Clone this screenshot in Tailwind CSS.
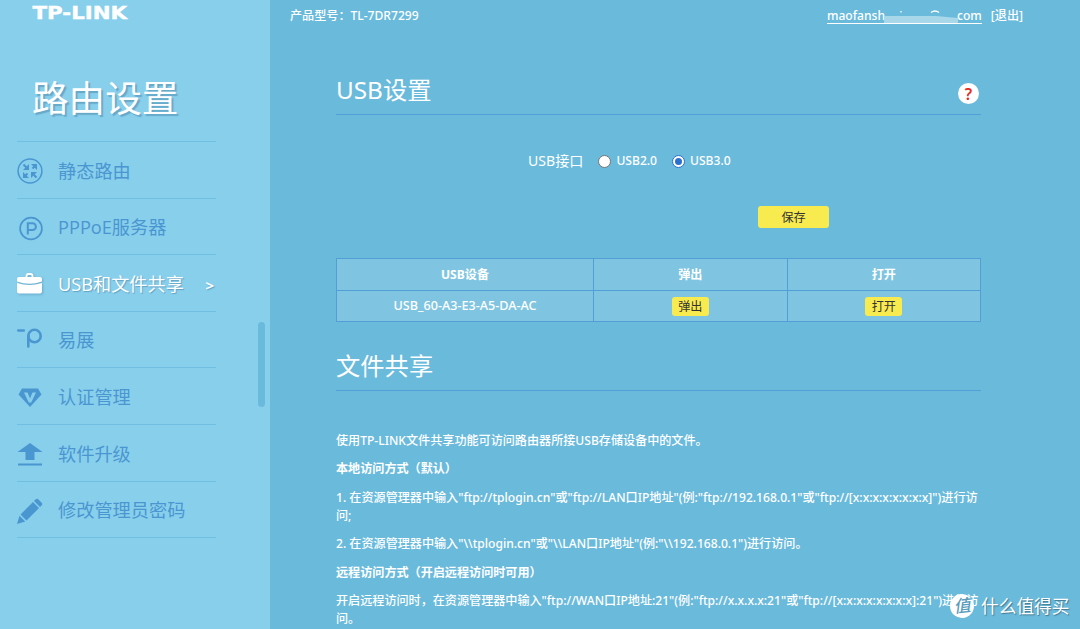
<!DOCTYPE html>
<html lang="zh-CN">
<head>
    <meta charset="UTF-8">
    <meta name="viewport" content="width=device-width, initial-scale=1.0">
    <title>TP-LINK 路由设置</title>
    <script src="https://cdn.jsdelivr.net/npm/@tailwindcss/browser@4"></script>
</head>
<body class="relative flex h-[629px] w-[1080px] overflow-hidden bg-[#6abadc] text-white font-['Open_Sans','Noto_Sans_CJK_SC',sans-serif]">

    <!-- Sidebar -->
    <aside class="relative h-full w-[270px] shrink-0 bg-[#88cfec] pl-[17px]">
        <svg class="ml-[15px] block h-[20px] w-[98px] overflow-visible" viewBox="0 0 98 20">
            <text x="0.5" y="19" textLength="94.5" lengthAdjust="spacingAndGlyphs" font-family="DejaVu Sans" font-weight="bold" font-size="16.8" fill="#fff" stroke="#fff" stroke-width="0.4">TP-LINK</text>
        </svg>
        <h1 class="ml-[15px] mt-[52px] h-[69px] whitespace-nowrap text-[36.6px] leading-[52px] text-shadow-[2px_2px_1px_rgb(70_130_165/0.5)]">路由设置</h1>

        <nav class="w-[199px] border-t border-[#71bfe0] text-[18.2px] text-[#4a96d1]">
            <a href="#" class="flex h-[56.6px] items-center border-b border-[#71bfe0] pt-[3px]">
                <svg class="h-[28px] w-[28px]" viewBox="0 0 28 28" fill="none" stroke="currentColor">
                    <circle cx="13" cy="14" r="11.9" stroke-width="1.5"/>
                    <path d="M6.500 7.500l4 4M19.500 7.500l-4 4M6.500 20.500l4-4M19.500 20.500l-4-4" stroke-width="2"/>
                    <path d="M12 7v6h-6zM20 7v6l-6-6zM12 21h-6v-6zM14 15h6l-6 6z" fill="currentColor" stroke="none"/>
                </svg>
                <span class="ml-[13px]">静态路由</span>
            </a>
            <a href="#" class="flex h-[56.6px] items-center border-b border-[#71bfe0] pt-[3px]">
                <svg class="h-[28px] w-[28px]" viewBox="0 0 28 28" fill="none" stroke="currentColor">
                    <circle cx="14" cy="14.500" r="10.900" stroke-width="1.700"/>
                    <path d="M10.800 20.500v-11.200h4.700a3.400 3.400 0 0 1 0 6.800h-4.700" stroke-width="2"/>
                </svg>
                <span class="ml-[13px]">PPPoE服务器</span>
            </a>
            <a href="#" class="flex h-[56.6px] items-center border-b border-[#71bfe0] pt-[3px] text-white text-shadow-[1px_1px_1px_rgb(70_130_165/0.6)]">
                <svg class="h-[28px] w-[28px] drop-shadow-[1px_1px_1px_rgb(70_130_165/0.5)]" viewBox="0 0 28 28" fill="currentColor">
                    <path d="M9.500 8v-2q0-2 2-2h2q2 0 2 2v2" fill="none" stroke="currentColor" stroke-width="1.800"/>
                    <path d="M2 7h21q2 0 2 2v2.500q-12.500 4.500-25 0v-2.500q0-2 2-2z"/>
                    <path d="M0 13q12.500 4.200 25 0v8.500q0 2-2 2h-21q-2 0-2-2z"/>
                </svg>
                <span class="ml-[13px]">USB和文件共享</span>
                <span class="ml-auto mr-[2px] mt-[2px] text-[15px] font-bold">&gt;</span>
            </a>
            <a href="#" class="flex h-[56.6px] items-center border-b border-[#71bfe0] pt-[3px]">
                <svg class="h-[28px] w-[28px]" viewBox="0 0 28 28" fill="none" stroke="currentColor" stroke-width="2.600" stroke-linecap="round">
                    <path d="M1.300 3.500h5.500M11.300 19.500v-10.500"/>
                    <circle cx="17.500" cy="9" r="6.200"/>
                </svg>
                <span class="ml-[13px]">易展</span>
            </a>
            <a href="#" class="flex h-[56.6px] items-center border-b border-[#71bfe0] pt-[3px]">
                <svg class="h-[28px] w-[28px]" viewBox="0 0 28 28" fill="currentColor">
                    <path d="M5 4.500h16l3.500 6-11.500 12.500-11.500-12.500z"/>
                    <path d="M7 8.500h3.500l2.500 6 2.500-6h3.500l-4.800 10h-2.400z" fill="#88cfec"/>
                </svg>
                <span class="ml-[13px]">认证管理</span>
            </a>
            <a href="#" class="flex h-[56.6px] items-center border-b border-[#71bfe0] pt-[3px]">
                <svg class="h-[28px] w-[28px]" viewBox="0 0 28 28" fill="currentColor">
                    <path d="M13 3l12.500 9h-8v8h-9v-8h-8zM1 23.500h24v2h-24z"/>
                </svg>
                <span class="ml-[13px]">软件升级</span>
            </a>
            <a href="#" class="flex h-[56.6px] items-center border-b border-[#71bfe0] pt-[3px]">
                <svg class="h-[28px] w-[28px]" viewBox="0 0 28 28" fill="currentColor">
                    <path d="M18.500 2.500q1.500-1.500 3 0l3 3q1.500 1.500 0 3l-1.500 1.500-6-6zM16 5l6 6-12.500 12.500-6-6zM2.500 18.800l5.700 5.700-8.200 2.500z"/>
                </svg>
                <span class="ml-[13px]">修改管理员密码</span>
            </a>
        </nav>

        <!-- Scrollbar thumb -->
        <div class="absolute left-[258px] top-[322px] h-[85px] w-[7px] rounded-full bg-[#6abadc]"></div>
    </aside>

    <!-- Main content -->
    <main class="flex h-full w-[810px] flex-col whitespace-nowrap font-medium font-['Noto_Sans','Noto_Sans_CJK_SC',sans-serif]">
        <header class="flex h-[32px] items-center pl-[20px] pr-[57px] text-[12.1px]">
            <span>产品型号：TL-7DR7299</span>
            <a href="#" class="ml-auto flex h-[15px] items-center border-b border-white leading-[14px]">
                <span>maofansh</span>
                <!-- masked part of the account name -->
                <svg class="h-[15px] w-[72px] overflow-visible" viewBox="0 0 72 15">
                    <path d="M16 3v1.500M46 4.500q4-3 8 0" fill="none" stroke="#fff" stroke-width="1.300"/>
                    <path d="M-1 8h52l22 2v5h-74z" fill="#a9d7ea"/>
                </svg>
                <span>com</span>
            </a>
            <a href="#" class="ml-[9px]">[退出]</a>
        </header>

        <div class="ml-[66px] flex w-[645px] flex-col">
            <div class="mt-[34px] flex h-[49px] items-center justify-between border-b border-[#519fd6] pt-px">
                <h2 class="text-[24.3px] font-normal">USB设置</h2>
                <span class="mr-[2px] mt-[6px] flex h-[21px] w-[21px] items-center justify-center rounded-full bg-white text-[16px] font-semibold text-[#e52b20]">?</span>
            </div>

            <div class="ml-[192px] mt-[34px] flex h-[24px] items-center text-[12.1px]">
                <span class="text-[14.1px] font-normal">USB接口</span>
                <span class="ml-[15px] h-[13px] w-[13px] rounded-full border border-[#767676] bg-white"></span>
                <span class="ml-[5px]">USB2.0</span>
                <span class="ml-[15px] flex h-[13px] w-[13px] items-center justify-center rounded-full border border-[#2a6fd0] bg-white"><span class="h-[7px] w-[7px] rounded-full bg-[#2a6fd0]"></span></span>
                <span class="ml-[5px]">USB3.0</span>
            </div>

            <button class="ml-[422px] mt-[33px] h-[22px] w-[71px] rounded-[3px] bg-[#f8eb50] pt-px text-[12.1px] font-normal leading-[21px] text-[#333]">保存</button>

            <table class="mt-[30px] w-full table-fixed border-collapse bg-[#7fc5e1] text-center text-[12.1px]">
                <tr class="h-[31.500px]">
                    <th class="w-[257px] border border-[#519fd6] pt-px">USB设备</th>
                    <th class="border border-[#519fd6] pt-px">弹出</th>
                    <th class="border border-[#519fd6] pt-px">打开</th>
                </tr>
                <tr class="h-[31.500px]">
                    <td class="border border-[#519fd6] pt-px text-[12.6px]">USB_60-A3-E3-A5-DA-AC</td>
                    <td class="border border-[#519fd6] pt-px"><button class="mx-auto block h-[19px] w-[37px] rounded-[3px] bg-[#f8eb50] pt-px font-normal leading-[18px] text-[#333]">弹出</button></td>
                    <td class="border border-[#519fd6] pt-px"><button class="mx-auto block h-[19px] w-[37px] rounded-[3px] bg-[#f8eb50] pt-px font-normal leading-[18px] text-[#333]">打开</button></td>
                </tr>
            </table>

            <div class="mt-[20px] flex h-[49px] items-center border-b border-[#519fd6]">
                <h2 class="text-[24.3px] font-normal">文件共享</h2>
            </div>

            <div class="mt-[41px] flex flex-col gap-[10.300px] text-[12.1px] leading-[18.100px]">
                <p>使用TP-LINK文件共享功能可访问路由器所接USB存储设备中的文件。</p>
                <p class="font-bold">本地访问方式（默认）</p>
                <p>1. 在资源管理器中输入"ftp://tplogin.cn"或"ftp://LAN口IP地址"(例:"ftp://192.168.0.1"或"ftp://[x:x:x:x:x:x:x:x]")进行访<br>问;</p>
                <p>2. 在资源管理器中输入"\\tplogin.cn"或"\\LAN口IP地址"(例:"\\192.168.0.1")进行访问。</p>
                <p class="font-bold">远程访问方式（开启远程访问时可用）</p>
                <p>开启远程访问时，在资源管理器中输入"ftp://WAN口IP地址:21"(例:"ftp://x.x.x.x:21"或"ftp://[x:x:x:x:x:x:x:x]:21")进行访<br>问。</p>
            </div>
        </div>
    </main>

    <!-- Watermark -->
    <div class="absolute left-[950px] top-[593px] flex h-[26px] items-center">
        <span class="flex h-[24px] w-[24px] -rotate-6 items-center justify-center rounded-full bg-white text-[17px] font-medium italic text-[#5a9dbb]">值</span>
        <span class="ml-[7px] text-[17.700px] text-shadow-[1px_1px_1px_rgb(50_90_110/0.7)]">什么值得买</span>
    </div>

</body>
</html>
